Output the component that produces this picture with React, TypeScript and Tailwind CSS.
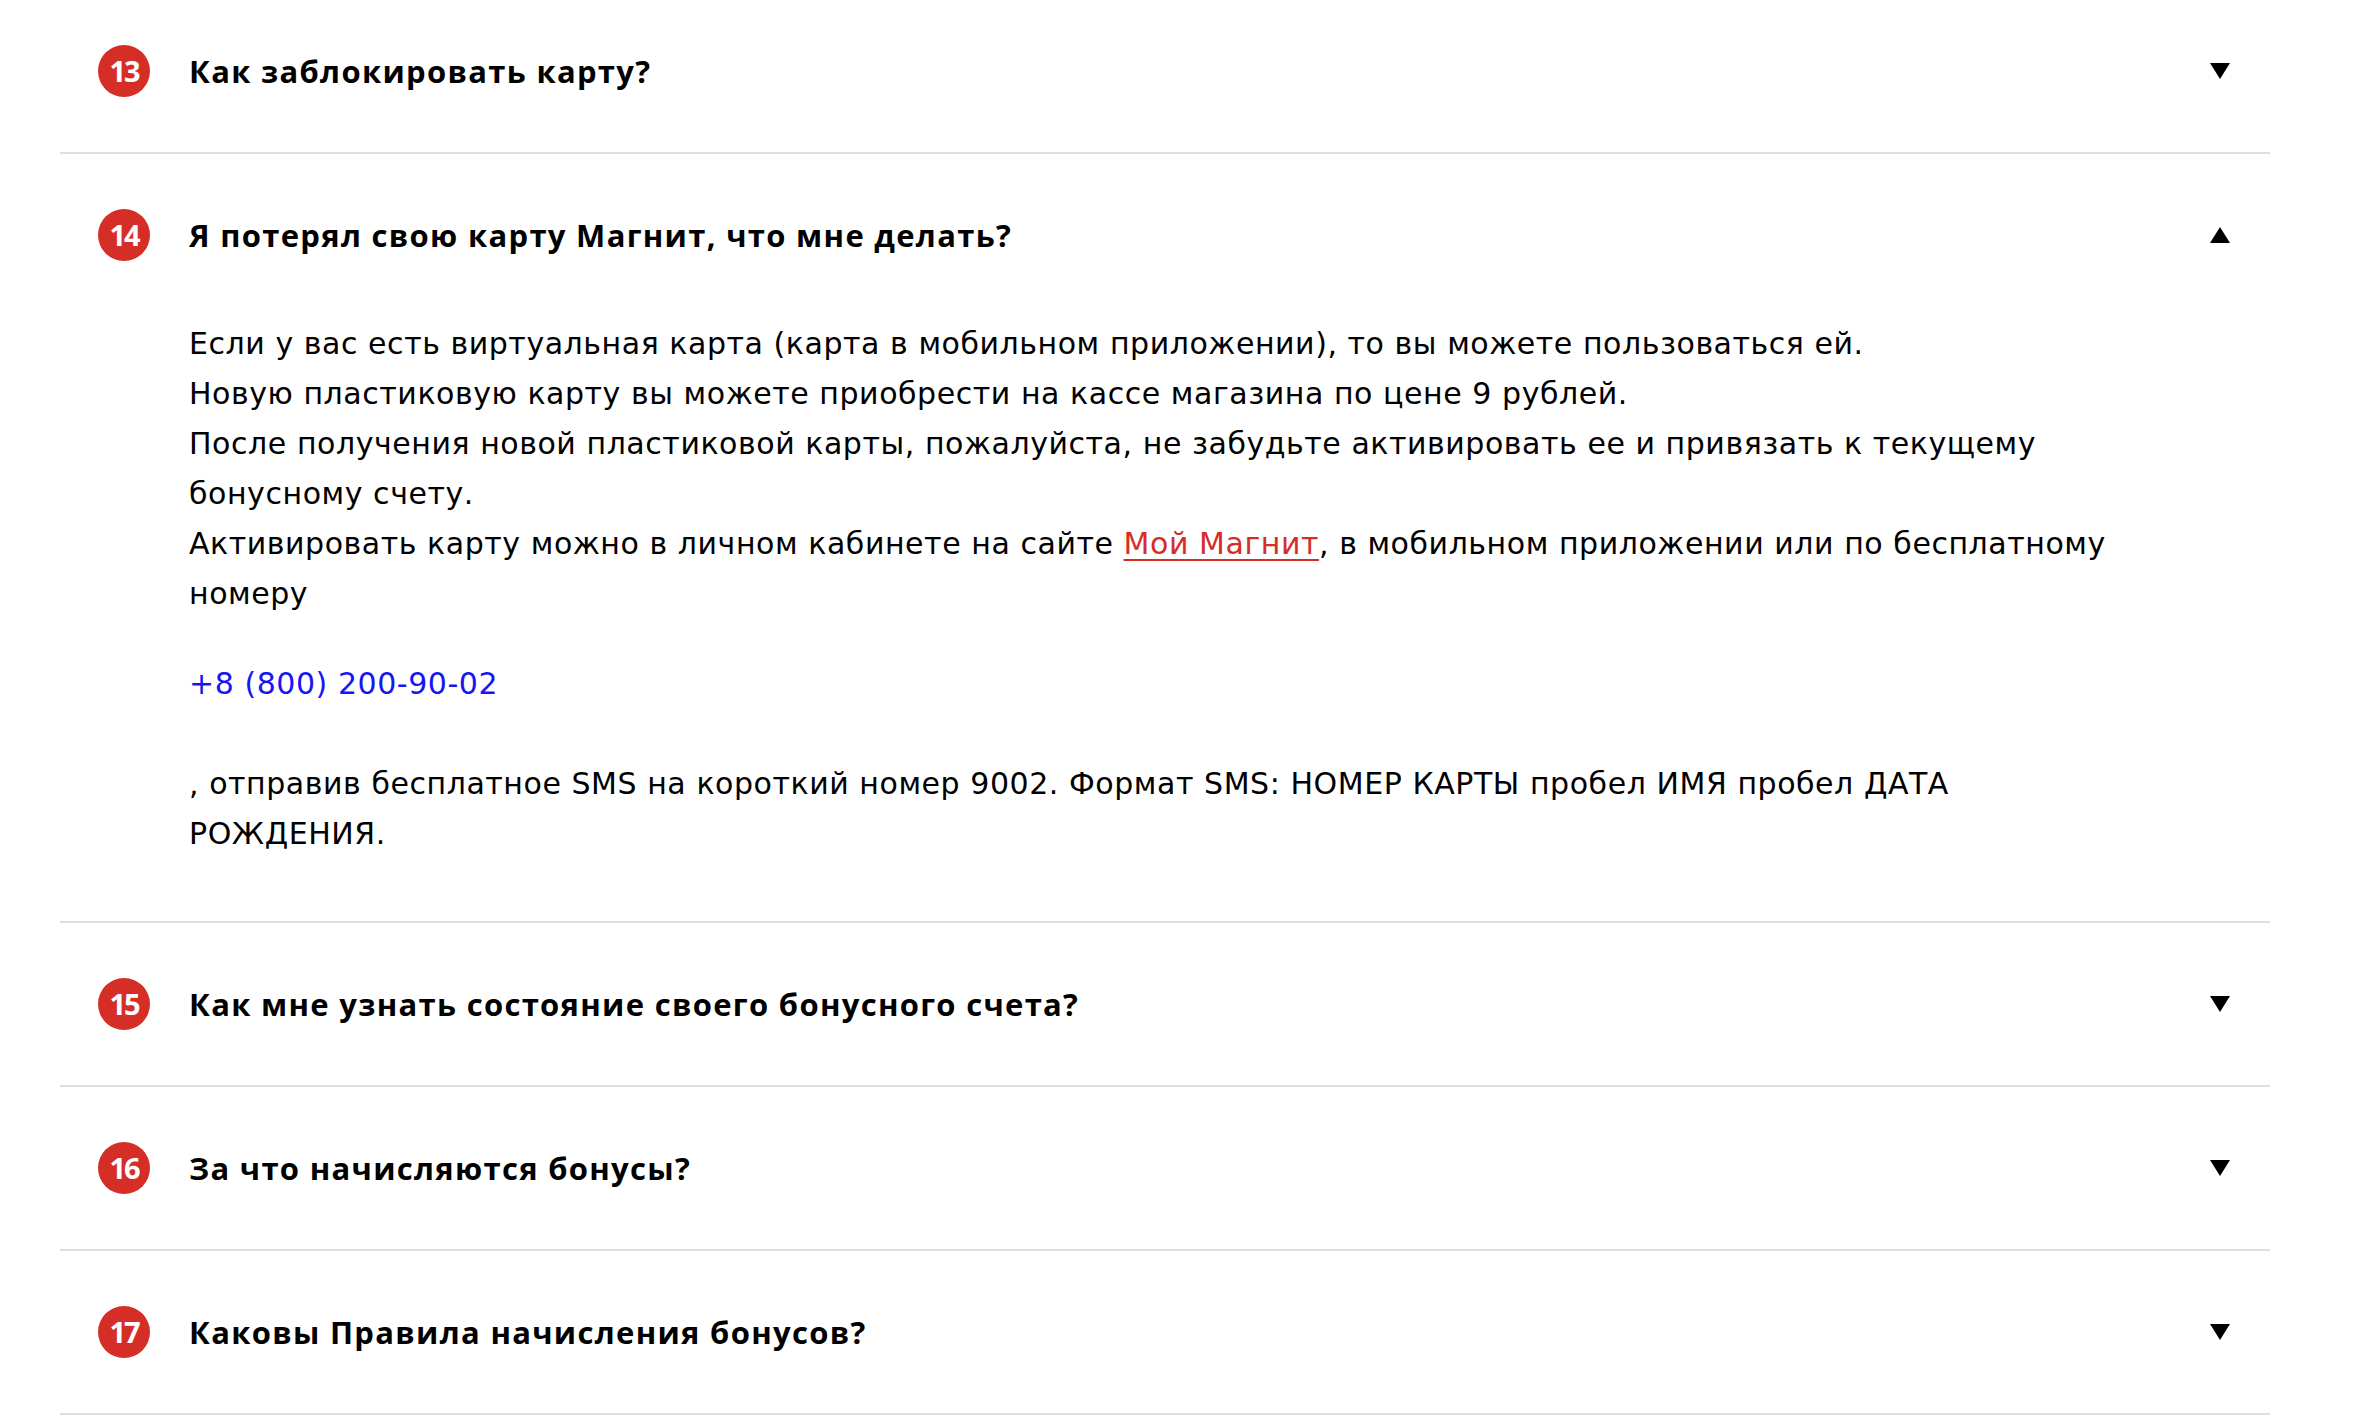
import React from "react";

interface FaqItem {
  n: number;
  q: string;
  open?: boolean;
}

const items: FaqItem[] = [
  { n: 13, q: "Как заблокировать карту?" },
  { n: 14, q: "Я потерял свою карту Магнит, что мне делать?", open: true },
  { n: 15, q: "Как мне узнать состояние своего бонусного счета?" },
  { n: 16, q: "За что начисляются бонусы?" },
  { n: 17, q: "Каковы Правила начисления бонусов?" },
];

function Chevron({ up }: { up?: boolean }) {
  return (
    <svg width="20" height="16" viewBox="0 0 20 16" className="shrink-0">
      {up ? <path d="M10 0 L20 16 L0 16 Z" fill="#000" /> : <path d="M0 0 L20 0 L10 16 Z" fill="#000" />}
    </svg>
  );
}

function Answer() {
  return (
    <div className="pl-[129px] pr-[135px] pt-[3px] pb-[62px] font-['DejaVu_Sans',sans-serif] text-[30px] leading-[50px] tracking-[0.55px] text-black">
      <p>
        Если у вас есть виртуальная карта (карта в мобильном приложении), то вы можете пользоваться ей.
        <br />
        Новую пластиковую карту вы можете приобрести на кассе магазина по цене 9 рублей.
        <br />
        После получения новой пластиковой карты, пожалуйста, не забудьте активировать ее и привязать к текущему
        бонусному счету.
        <br />
        Активировать карту можно в личном кабинете на сайте{" "}
        <a href="#" className="text-[#d52e26] underline underline-offset-[5px] decoration-2">
          Мой Магнит
        </a>
        , в мобильном приложении или по бесплатному номеру
      </p>
      <p className="mt-[40px] mb-[50px]">
        <a href="#" className="text-[#1616f0]">
          +8 (800) 200-90-02
        </a>
      </p>
      <p>
        , отправив бесплатное SMS на короткий номер 9002. Формат SMS: НОМЕР КАРТЫ пробел ИМЯ пробел ДАТА РОЖДЕНИЯ.
      </p>
    </div>
  );
}

export default function App() {
  return (
    <div className="h-[1416px] w-full overflow-hidden bg-white font-['Open_Sans',sans-serif]">
      <div className="-mt-[10px] ml-[60px] w-[2210px]">
        {items.map((item) => (
          <div key={item.n} className="border-b-2 border-[#dedee3]">
            <div className="flex h-[162px] items-center pl-[38px] pr-[40px]">
              <div className="flex h-[52px] w-[52px] shrink-0 items-center justify-center rounded-full bg-[#d52e26] text-[29px] font-bold tracking-[-2px] text-white">
                {item.n}
              </div>
              <div className="ml-[39px] flex-1 text-[31px] font-bold tracking-[1.3px] text-black">{item.q}</div>
              <Chevron up={item.open} />
            </div>
            {item.open && <Answer />}
          </div>
        ))}
      </div>
    </div>
  );
}
